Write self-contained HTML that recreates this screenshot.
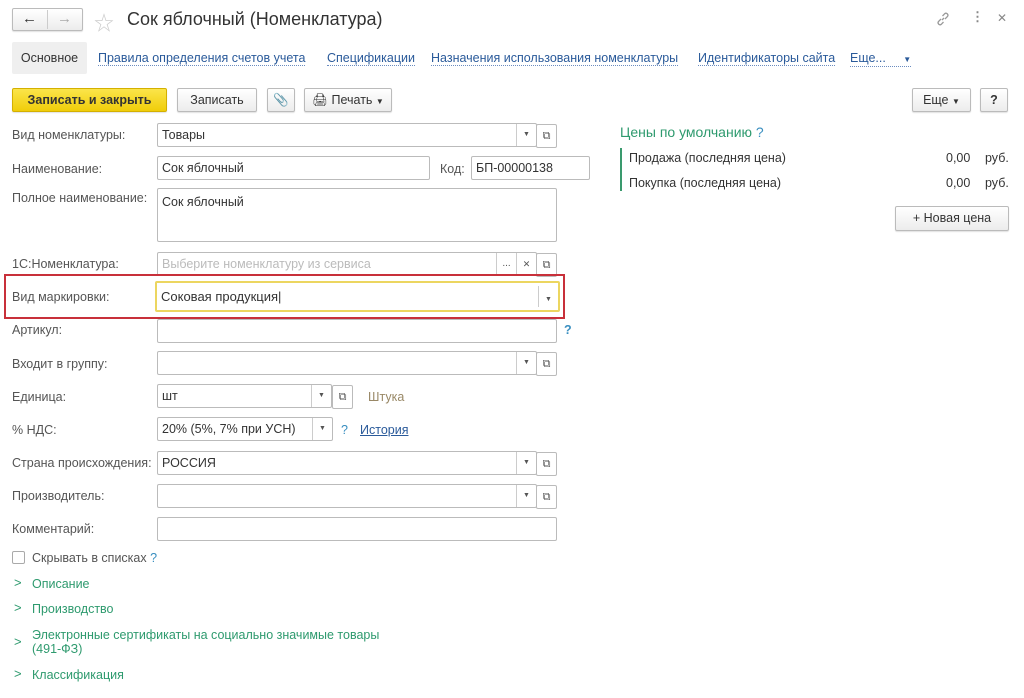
<!DOCTYPE html>
<html><head><meta charset="utf-8"><style>
*{box-sizing:border-box;margin:0;padding:0}
body{width:1024px;height:698px;background:#fff;font-family:"Liberation Sans","Noto Sans CJK SC",sans-serif;font-size:12.5px;color:#444;position:relative;overflow:hidden}
.a{position:absolute;white-space:nowrap}
.lbl{position:absolute;left:12px;color:#555;font-size:12.5px}
.in{position:absolute;border:1px solid #bbb;border-radius:2px;background:#fff;height:24px;padding-left:4px;line-height:22px;color:#333}
.btn{position:absolute;border:1px solid #bbb;border-radius:2px;background:linear-gradient(#fff,#ececec);height:24px;line-height:22px;text-align:center;color:#333;box-shadow:0 1px 1px rgba(0,0,0,.12)}
.dd{position:absolute;top:0;bottom:0;width:20px;border-left:1px solid #ccc;text-align:center;font-size:7px;color:#555}
.op{position:absolute;top:-1px;height:24px;width:21px;border:1px solid #bbb;border-radius:2px;background:#fff;text-align:center;font-size:11px;line-height:22px;color:#555}
.lnk{position:absolute;top:52px;color:#2a5a9a;border-bottom:1px dotted #6b8cc0;line-height:13px}
.grp{position:absolute;left:14px;color:#2e9a6e;font-size:12.5px}
.chev{position:absolute;left:14px;color:#2e9a6e;font-size:13px}
.q{color:#3a8fc0}
</style></head><body>
<div class="btn" style="left:12px;top:8px;width:71px;height:23px"></div>
<div class="a" style="left:47px;top:10px;height:19px;border-left:1px solid #ccc"></div>
<div class="a" style="left:22px;top:10px;font-size:15px;color:#333">&#8592;</div>
<div class="a" style="left:57px;top:10px;font-size:15px;color:#aaa">&#8594;</div>
<div class="a" style="left:94px;top:7px;font-size:20px;color:#ccc">&#9734;</div>
<div class="a" style="left:127px;top:9px;font-size:18px;color:#333">Сок яблочный (Номенклатура)</div>
<svg class="a" style="left:935px;top:11px" width="16" height="16" viewBox="0 0 16 16" fill="none" stroke="#999" stroke-width="1.3"><path d="M7 9 L9 7"/><path d="M6 8 L3.5 10.5 a2 2 0 0 0 2.8 2.8 L8.5 11"/><path d="M10 8 L12.5 5.5 a2 2 0 0 0 -2.8 -2.8 L7.5 5"/></svg>
<div class="a" style="left:971px;top:9px;font-size:13px;color:#888;font-weight:bold">&#8942;</div>
<div class="a" style="left:997px;top:11px;font-size:12px;color:#888">&#10005;</div>

<div class="a" style="left:12px;top:42px;width:75px;height:32px;background:#efefef;border-radius:2px;line-height:32px;text-align:center;color:#333">Основное</div>
<div class="lnk a" style="left:98px">Правила определения счетов учета</div>
<div class="lnk a" style="left:327px">Спецификации</div>
<div class="lnk a" style="left:431px">Назначения использования номенклатуры</div>
<div class="lnk a" style="left:698px">Идентификаторы сайта</div>
<div class="lnk a" style="left:850px">Еще...&nbsp;&nbsp;&nbsp;&nbsp;&nbsp;<span style="font-size:8px">&#9660;</span></div>

<div class="btn" style="left:12px;top:88px;width:155px;background:linear-gradient(#fbe54a,#f0cd0a);border-color:#d4b000;font-weight:bold;color:#333">Записать и закрыть</div>
<div class="btn" style="left:177px;top:88px;width:80px">Записать</div>
<div class="btn" style="left:267px;top:88px;width:28px;color:#888">&#128206;</div>
<div class="btn" style="left:304px;top:88px;width:88px">&#128424; Печать <span style="font-size:8px">&#9660;</span></div>
<div class="btn" style="left:912px;top:88px;width:59px">Еще <span style="font-size:8px">&#9660;</span></div>
<div class="btn" style="left:980px;top:88px;width:28px;font-weight:bold">?</div>

<div class="lbl" style="top:128px">Вид номенклатуры:</div>
<div class="in" style="left:157px;top:123px;width:380px">Товары<div class="dd" style="right:0">&#9660;</div></div>
<div class="op" style="left:536px;top:124px">&#10697;</div>

<div class="lbl" style="top:162px">Наименование:</div>
<div class="in" style="left:157px;top:156px;width:273px">Сок яблочный</div>
<div class="a" style="left:440px;top:162px;color:#555">Код:</div>
<div class="in" style="left:471px;top:156px;width:119px">БП-00000138</div>

<div class="lbl" style="top:191px">Полное наименование:</div>
<div class="in" style="left:157px;top:188px;width:400px;height:54px;line-height:26px">Сок яблочный</div>

<div class="lbl" style="top:257px">1С:Номенклатура:</div>
<div class="in" style="left:157px;top:252px;width:380px;color:#bbb">Выберите номенклатуру из сервиса<div class="dd" style="right:20px;font-size:10px">...</div><div class="dd" style="right:0;font-size:9px">&#10005;</div></div>
<div class="op" style="left:536px;top:253px">&#10697;</div>

<div class="a" style="left:4px;top:274px;width:561px;height:45px;border:2px solid #c8303a"></div>
<div class="lbl" style="top:290px">Вид маркировки:</div>
<div class="in" style="left:155px;top:281px;width:405px;height:31px;border:2px solid #ecd660;line-height:27px;font-size:13px">Соковая продукция|<div class="dd" style="right:0;top:3px;bottom:3px">&#9660;</div></div>

<div class="lbl" style="top:323px">Артикул:</div>
<div class="in" style="left:157px;top:319px;width:400px"></div>
<div class="a q" style="left:564px;top:323px;font-weight:bold">?</div>

<div class="lbl" style="top:357px">Входит в группу:</div>
<div class="in" style="left:157px;top:351px;width:380px"><div class="dd" style="right:0">&#9660;</div></div>
<div class="op" style="left:536px;top:352px">&#10697;</div>

<div class="lbl" style="top:390px">Единица:</div>
<div class="in" style="left:157px;top:384px;width:175px">шт<div class="dd" style="right:0">&#9660;</div></div>
<div class="op" style="left:332px;top:385px">&#10697;</div>
<div class="a" style="left:368px;top:390px;color:#998866">Штука</div>

<div class="lbl" style="top:423px">% НДС:</div>
<div class="in" style="left:157px;top:417px;width:176px">20% (5%, 7% при УСН)<div class="dd" style="right:0">&#9660;</div></div>
<div class="a q" style="left:341px;top:423px">?</div>
<div class="a" style="left:360px;top:423px;color:#2a5a9a;text-decoration:underline">История</div>

<div class="lbl" style="top:456px">Страна происхождения:</div>
<div class="in" style="left:157px;top:451px;width:380px">РОССИЯ<div class="dd" style="right:0">&#9660;</div></div>
<div class="op" style="left:536px;top:452px">&#10697;</div>

<div class="lbl" style="top:489px">Производитель:</div>
<div class="in" style="left:157px;top:484px;width:380px"><div class="dd" style="right:0">&#9660;</div></div>
<div class="op" style="left:536px;top:485px">&#10697;</div>

<div class="lbl" style="top:522px">Комментарий:</div>
<div class="in" style="left:157px;top:517px;width:400px"></div>

<div class="a" style="left:12px;top:551px;width:13px;height:13px;border:1px solid #aaa;border-radius:2px"></div>
<div class="a" style="left:32px;top:551px;color:#555">Скрывать в списках <span class="q">?</span></div>

<div class="chev a" style="top:575px">&gt;</div>
<div class="grp a" style="left:32px;top:577px">Описание</div>
<div class="chev a" style="top:600px">&gt;</div>
<div class="grp a" style="left:32px;top:602px">Производство</div>
<div class="chev a" style="top:634px">&gt;</div>
<div class="grp a" style="left:32px;top:628px;line-height:14px">Электронные сертификаты на социально значимые товары<br>(491-ФЗ)</div>
<div class="chev a" style="top:666px">&gt;</div>
<div class="grp a" style="left:32px;top:668px">Классификация</div>

<div class="a" style="left:620px;top:124px;font-size:14px;color:#2e9a6e">Цены по умолчанию <span class="q">?</span></div>
<div class="a" style="left:620px;top:148px;width:2px;height:43px;background:#3a9a6e"></div>
<div class="a" style="left:629px;top:151px;color:#333">Продажа (последняя цена)</div>
<div class="a" style="left:629px;top:176px;color:#333">Покупка (последняя цена)</div>
<div class="a" style="left:946px;top:151px;color:#333">0,00</div>
<div class="a" style="left:985px;top:151px;color:#333">руб.</div>
<div class="a" style="left:946px;top:176px;color:#333">0,00</div>
<div class="a" style="left:985px;top:176px;color:#333">руб.</div>
<div class="btn" style="left:895px;top:206px;width:114px;height:25px">+ Новая цена</div>
</body></html>
